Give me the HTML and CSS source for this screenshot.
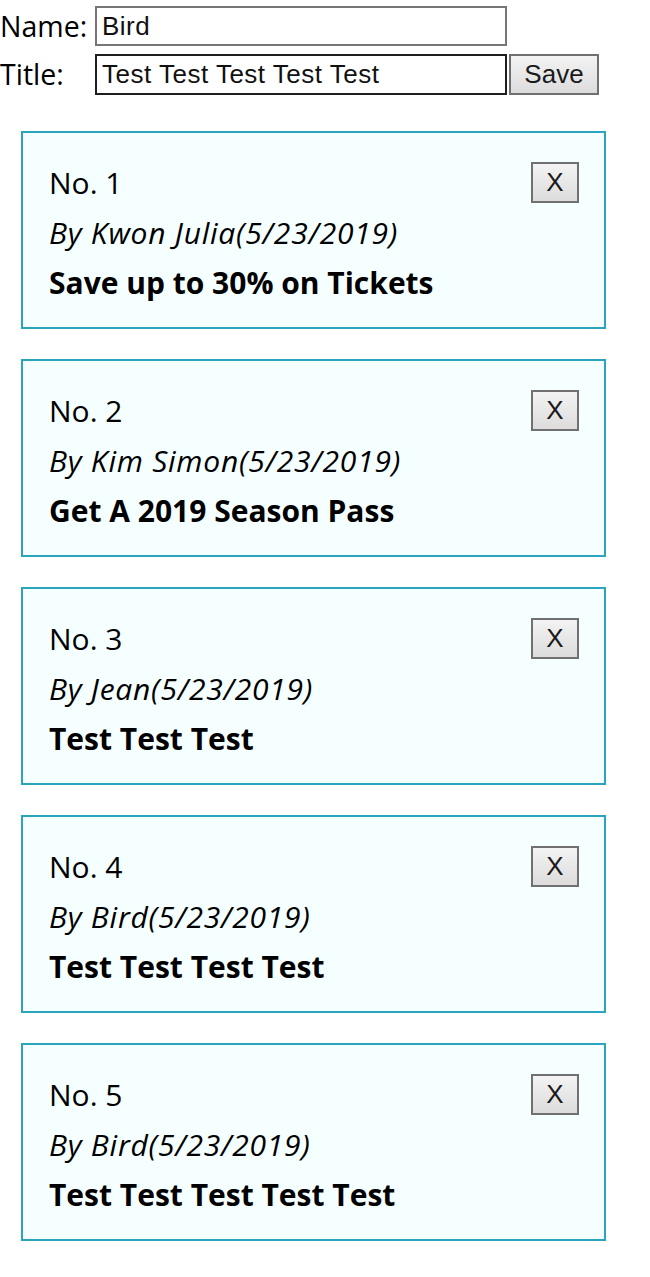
FILE: index.html
```html
<!DOCTYPE html>
<html>
<head>
<meta charset="utf-8">
<link rel="stylesheet" href="styles.css">
</head>
<body>
<div class="form">
  <div class="row">
    <label class="label">Name:</label>
    <input class="input" type="text" value="Bird">
  </div>
  <div class="row">
    <label class="label">Title:</label>
    <input class="input input-focus" type="text" value="Test Test Test Test Test">
    <button class="btn save">Save</button>
  </div>
</div>
<div class="list">
  <div class="card">
    <div class="head"><span class="no">No. 1</span><button class="btn close">X</button></div>
    <div class="by">By Kwon Julia(5/23/2019)</div>
    <div class="title">Save up to 30% on Tickets</div>
  </div>
  <div class="card">
    <div class="head"><span class="no">No. 2</span><button class="btn close">X</button></div>
    <div class="by">By Kim Simon(5/23/2019)</div>
    <div class="title">Get A 2019 Season Pass</div>
  </div>
  <div class="card">
    <div class="head"><span class="no">No. 3</span><button class="btn close">X</button></div>
    <div class="by">By Jean(5/23/2019)</div>
    <div class="title">Test Test Test</div>
  </div>
  <div class="card">
    <div class="head"><span class="no">No. 4</span><button class="btn close">X</button></div>
    <div class="by">By Bird(5/23/2019)</div>
    <div class="title">Test Test Test Test</div>
  </div>
  <div class="card">
    <div class="head"><span class="no">No. 5</span><button class="btn close">X</button></div>
    <div class="by">By Bird(5/23/2019)</div>
    <div class="title">Test Test Test Test Test</div>
  </div>
</div>
</body>
</html>
```
FILE: styles.css
```css
html, body {
  margin: 0;
  padding: 0;
  background: #fff;
}
body {
  font-family: "Open Sans", "Noto Sans", sans-serif;
  color: #000;
}
.form {
  padding-top: 6px;
}
.row {
  display: flex;
  align-items: center;
  height: 40px;
  margin-bottom: 8px;
}
.label {
  width: 95px;
  font-size: 28.5px;
  line-height: 40px;
  flex: none;
}
.input {
  box-sizing: border-box;
  width: 412px;
  height: 40px;
  border: 2px solid #767676;
  padding: 0 5px;
  margin: 0;
  font-family: "Liberation Sans", Arial, sans-serif;
  font-size: 26px;
  letter-spacing: 0.5px;
  color: #111;
  background: #fff;
  outline: none;
}
.input-focus {
  height: 41px;
  border-color: #1e1e1e;
}
.btn {
  box-sizing: border-box;
  border: 2px solid #707070;
  background: linear-gradient(#f3f3f3, #dcdcdc);
  font-family: "Liberation Sans", Arial, sans-serif;
  color: #1a1a1a;
  padding: 0;
  margin: 0;
}
.save {
  width: 90px;
  height: 41px;
  margin-left: 2px;
  font-size: 26px;
}
.list {
  margin-top: 37px;
  padding-left: 21px;
}
.card {
  box-sizing: border-box;
  width: 585px;
  height: 198px;
  border: 2px solid #2aa5bd;
  background: #f5ffff;
  padding: 25px 25px 0 26px;
  margin-bottom: 30px;
}
.head {
  display: flex;
  justify-content: space-between;
  align-items: flex-start;
  height: 50px;
}
.no {
  font-size: 30px;
  line-height: 50px;
}
.close {
  width: 48px;
  height: 41px;
  margin-top: 4px;
  font-size: 26px;
}
.by {
  font-size: 30px;
  letter-spacing: 0.75px;
  font-style: italic;
  line-height: 50px;
}
.title {
  font-size: 30px;
  font-weight: bold;
  line-height: 50px;
}
```
